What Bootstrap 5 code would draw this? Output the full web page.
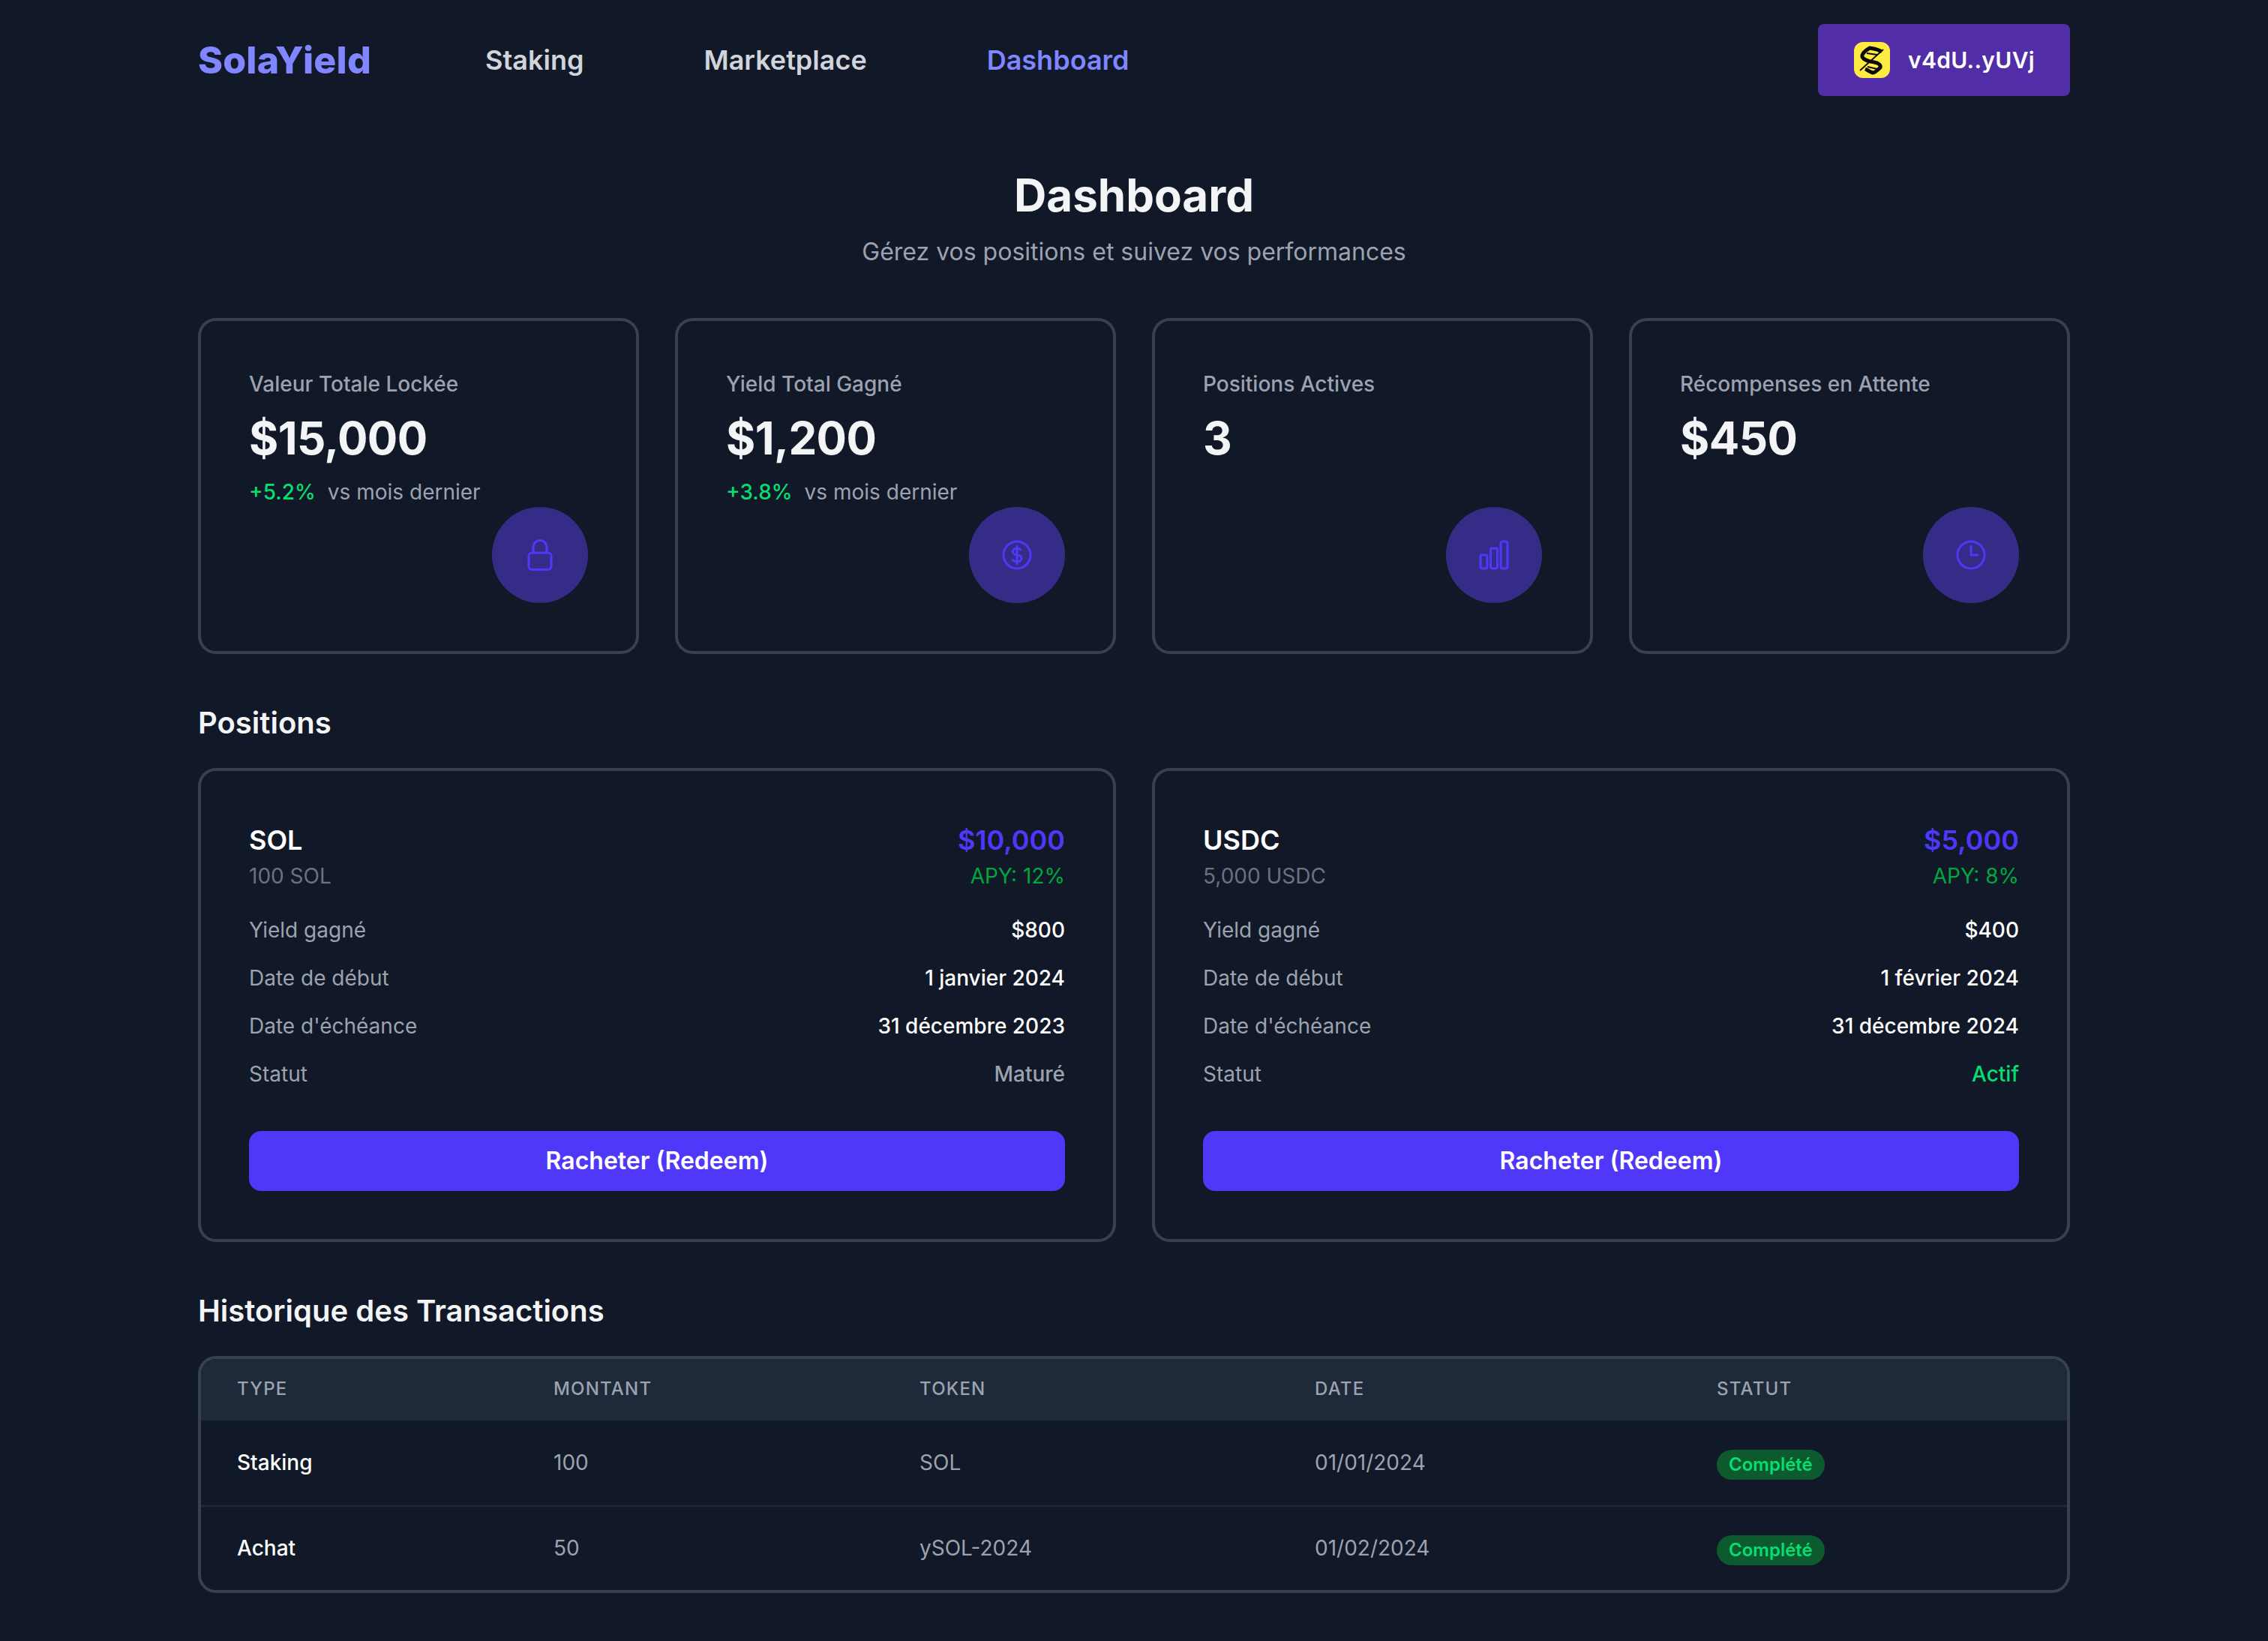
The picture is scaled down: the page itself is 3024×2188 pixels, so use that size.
<!doctype html>
<html lang="fr">
<head>
<meta charset="utf-8">
<title>SolaYield</title>
<link rel="stylesheet" href="https://cdn.jsdelivr.net/npm/bootstrap@5.3.0/dist/css/bootstrap.min.css">
<style>
body{background:#111827;color:#f3f4f6;font-family:Inter,"Liberation Sans",sans-serif;font-size:32px;line-height:1.5}
.sy-wrap{width:2496px;margin:0 auto;padding-bottom:64px}
.sy-nav{height:160px}
.sy-brand{font-size:50px;font-weight:800;color:#7f86ff;line-height:72px;width:223px;margin-right:160px;text-decoration:none;white-space:nowrap;letter-spacing:.2px}
.sy-links{gap:160px}
.sy-links a{font-size:36px;font-weight:600;color:#d1d5db;text-decoration:none;line-height:48px}
.sy-links a.sy-on{color:#7f86ff}
.sy-wallet{height:96px;width:336px;background:#512da8;border:0;border-radius:8px;color:#fff;font-weight:600;font-size:30px;letter-spacing:.3px;padding:0 48px;gap:24px}
.sy-wallet:hover{background:#512da8;color:#fff}
.sy-logo{width:48px;height:48px;flex:none}
.sy-title{font-size:60px;font-weight:700;line-height:72px;margin:64px 0 16px;color:#f3f4f6}
.sy-sub{font-size:32px;line-height:48px;color:#9ca3af;margin-bottom:64px}
.sy-cols{--bs-gutter-x:48px;--bs-gutter-y:0}
.sy-card{background:transparent;border:4px solid #374151;border-radius:24px;padding:64px;color:#f3f4f6}
.sy-stat{height:448px}
.sy-lab{font-size:28px;line-height:40px;color:#9ca3af;font-weight:500}
.sy-val{font-size:60px;line-height:72px;font-weight:700;letter-spacing:-.6px;margin:16px 0}
.sy-chg{font-size:28px;line-height:40px;color:#9ca3af}
.sy-up{color:#05df72;font-weight:500;margin-right:16px}
.sy-disc{width:128px;height:128px;background:#342c87;border-radius:50%;flex:none}
.sy-disc svg{width:48px;height:48px;fill:none;stroke:#5038fa;stroke-width:1.5;stroke-linecap:round;stroke-linejoin:round}
.sy-h2{font-size:40px;line-height:56px;font-weight:600;color:#f3f4f6;margin:0 0 32px}
.sy-sec1,.sy-sec2{margin-top:64px}
.sy-pos{height:632px}
.sy-tok{font-size:36px;line-height:56px;font-weight:600;color:#fff}
.sy-price{font-size:36px;line-height:56px;font-weight:600;color:#5038fa}
.sy-qty{font-size:28px;line-height:40px;color:#6a7282}
.sy-apy{font-size:28px;line-height:40px;color:#00a63e}
.sy-rows{margin-top:32px;gap:24px}
.sy-rowl{font-size:28px;line-height:40px;color:#9ca3af}
.sy-rowv{font-size:28px;line-height:40px;color:#fff;font-weight:500}
.sy-rowv.sy-mat{color:#9ca3af}
.sy-rowv.sy-act{color:#05df72}
.sy-btn{height:80px;margin-top:56px;background:#5038fa;color:#fff;border:0;border-radius:16px;font-size:32px;font-weight:600;line-height:48px;padding:0}
.sy-btn:hover{background:#5038fa;color:#fff}
.sy-tbox{border:4px solid #374151;border-radius:24px;overflow:hidden}
.sy-table{margin:0;table-layout:fixed;width:2488px;--bs-table-bg:transparent;--bs-table-color:#9ca3af;color:#9ca3af}
.sy-table th{background:#1e2939;color:#9ca3af;font-size:24px;font-weight:500;letter-spacing:1.2px;text-transform:uppercase;height:82px;padding:0 0 2px 48px;vertical-align:middle;border:0;line-height:32px}
.sy-table td{height:112px;padding:0 0 2px 48px;vertical-align:middle;font-size:28px;line-height:40px;border:0;color:#9ca3af}
.sy-table tbody tr:first-child td{height:114px;border-bottom:2px solid #1e2939}
.sy-table td.sy-type{color:#fff;font-weight:500}
.sy-c1{width:422px}.sy-c2{width:488px}.sy-c3{width:527px}.sy-c4{width:536px}.sy-c5{width:515px}
.sy-pill{display:inline-block;background:#0d5a2e;color:#05df72;font-size:24px;font-weight:600;line-height:40px;height:40px;padding:0 16px;border-radius:20px;vertical-align:middle;margin-top:6px}
</style>
</head>
<body>
<div class="sy-wrap">
  <nav class="sy-nav d-flex align-items-center">
    <a class="sy-brand" href="#">SolaYield</a>
    <div class="sy-links d-flex align-items-center flex-grow-1">
      <a href="#">Staking</a>
      <a href="#">Marketplace</a>
      <a href="#" class="sy-on">Dashboard</a>
    </div>
    <button class="sy-wallet btn d-flex align-items-center" type="button">
      <svg class="sy-logo" viewBox="0 0 48 48" aria-hidden="true"><rect width="48" height="48" rx="12" fill="#ffeb3f"/><g fill="none" stroke="#0a0a0a" stroke-linecap="butt" stroke-linejoin="miter"><path d="M37 13 C31 9 27 9 21 8 C14 12 10 16 11 20 C14 25 21 26 27 27 C33 28 36 31 35 34 C31 38 28 41 25 41 C21 40 18 37 15 36" stroke-width="5"/><path d="M8 38 L39 10" stroke-width="1.8"/><path d="M17 15 L31 17 M18 33 L31 36" stroke-width="1.8"/></g></svg>
      <span>v4dU..yUVj</span>
    </button>
  </nav>

  <header class="text-center">
    <h1 class="sy-title">Dashboard</h1>
    <p class="sy-sub">Gérez vos positions et suivez vos performances</p>
  </header>

  <div class="row sy-cols">
    <div class="col-3">
      <div class="card sy-card sy-stat">
        <div class="sy-lab">Valeur Totale Lockée</div>
        <div class="sy-val">$15,000</div>
        <div class="sy-chg"><span class="sy-up">+5.2%</span>vs mois dernier</div>
        <div class="sy-disc d-flex align-items-center justify-content-center ms-auto mt-auto">
          <svg viewBox="0 0 24 24"><path d="M16.5 10.5V6.75a4.5 4.5 0 1 0-9 0v3.75m-.75 11.25h10.5a2.25 2.25 0 0 0 2.25-2.25v-6.75a2.25 2.25 0 0 0-2.25-2.25H6.75a2.25 2.25 0 0 0-2.25 2.25v6.75a2.25 2.25 0 0 0 2.25 2.25Z"/></svg>
        </div>
      </div>
    </div>
    <div class="col-3">
      <div class="card sy-card sy-stat">
        <div class="sy-lab">Yield Total Gagné</div>
        <div class="sy-val">$1,200</div>
        <div class="sy-chg"><span class="sy-up">+3.8%</span>vs mois dernier</div>
        <div class="sy-disc d-flex align-items-center justify-content-center ms-auto mt-auto">
          <svg viewBox="0 0 24 24"><path d="M12 6v12m-3-2.818.879.659c1.171.879 3.07.879 4.242 0 1.172-.879 1.172-2.303 0-3.182C13.536 12.219 12.768 12 12 12c-.725 0-1.45-.22-2.003-.659-1.106-.879-1.106-2.303 0-3.182s2.9-.879 4.006 0l.415.33M21 12a9 9 0 1 1-18 0 9 9 0 0 1 18 0Z"/></svg>
        </div>
      </div>
    </div>
    <div class="col-3">
      <div class="card sy-card sy-stat">
        <div class="sy-lab">Positions Actives</div>
        <div class="sy-val">3</div>
        <div class="sy-disc d-flex align-items-center justify-content-center ms-auto mt-auto">
          <svg viewBox="0 0 24 24"><path d="M3 13.125C3 12.504 3.504 12 4.125 12h2.25c.621 0 1.125.504 1.125 1.125v6.75C7.5 20.496 6.996 21 6.375 21h-2.25A1.125 1.125 0 0 1 3 19.875v-6.75ZM9.75 8.625c0-.621.504-1.125 1.125-1.125h2.25c.621 0 1.125.504 1.125 1.125v11.25c0 .621-.504 1.125-1.125 1.125h-2.25a1.125 1.125 0 0 1-1.125-1.125V8.625ZM16.5 4.125c0-.621.504-1.125 1.125-1.125h2.25C20.496 3 21 3.504 21 4.125v15.75c0 .621-.504 1.125-1.125 1.125h-2.25a1.125 1.125 0 0 1-1.125-1.125V4.125Z"/></svg>
        </div>
      </div>
    </div>
    <div class="col-3">
      <div class="card sy-card sy-stat">
        <div class="sy-lab">Récompenses en Attente</div>
        <div class="sy-val">$450</div>
        <div class="sy-disc d-flex align-items-center justify-content-center ms-auto mt-auto">
          <svg viewBox="0 0 24 24"><path d="M12 6v6h4.5m4.5 0a9 9 0 1 1-18 0 9 9 0 0 1 18 0Z"/></svg>
        </div>
      </div>
    </div>
  </div>

  <section class="sy-sec1">
    <h2 class="sy-h2">Positions</h2>
    <div class="row sy-cols">
      <div class="col-6">
        <div class="card sy-card sy-pos">
          <div class="d-flex justify-content-between"><span class="sy-tok">SOL</span><span class="sy-price">$10,000</span></div>
          <div class="d-flex justify-content-between"><span class="sy-qty">100 SOL</span><span class="sy-apy">APY: 12%</span></div>
          <div class="sy-rows d-flex flex-column">
            <div class="d-flex justify-content-between"><span class="sy-rowl">Yield gagné</span><span class="sy-rowv">$800</span></div>
            <div class="d-flex justify-content-between"><span class="sy-rowl">Date de début</span><span class="sy-rowv">1 janvier 2024</span></div>
            <div class="d-flex justify-content-between"><span class="sy-rowl">Date d'échéance</span><span class="sy-rowv">31 décembre 2023</span></div>
            <div class="d-flex justify-content-between"><span class="sy-rowl">Statut</span><span class="sy-rowv sy-mat">Maturé</span></div>
          </div>
          <button class="btn sy-btn w-100" type="button">Racheter (Redeem)</button>
        </div>
      </div>
      <div class="col-6">
        <div class="card sy-card sy-pos">
          <div class="d-flex justify-content-between"><span class="sy-tok">USDC</span><span class="sy-price">$5,000</span></div>
          <div class="d-flex justify-content-between"><span class="sy-qty">5,000 USDC</span><span class="sy-apy">APY: 8%</span></div>
          <div class="sy-rows d-flex flex-column">
            <div class="d-flex justify-content-between"><span class="sy-rowl">Yield gagné</span><span class="sy-rowv">$400</span></div>
            <div class="d-flex justify-content-between"><span class="sy-rowl">Date de début</span><span class="sy-rowv">1 février 2024</span></div>
            <div class="d-flex justify-content-between"><span class="sy-rowl">Date d'échéance</span><span class="sy-rowv">31 décembre 2024</span></div>
            <div class="d-flex justify-content-between"><span class="sy-rowl">Statut</span><span class="sy-rowv sy-act">Actif</span></div>
          </div>
          <button class="btn sy-btn w-100" type="button">Racheter (Redeem)</button>
        </div>
      </div>
    </div>
  </section>

  <section class="sy-sec2">
    <h2 class="sy-h2">Historique des Transactions</h2>
    <div class="sy-tbox">
      <table class="table sy-table">
        <thead>
          <tr><th class="sy-c1">Type</th><th class="sy-c2">Montant</th><th class="sy-c3">Token</th><th class="sy-c4">Date</th><th class="sy-c5">Statut</th></tr>
        </thead>
        <tbody>
          <tr><td class="sy-type">Staking</td><td>100</td><td>SOL</td><td>01/01/2024</td><td><span class="sy-pill">Complété</span></td></tr>
          <tr><td class="sy-type">Achat</td><td>50</td><td>ySOL-2024</td><td>01/02/2024</td><td><span class="sy-pill">Complété</span></td></tr>
        </tbody>
      </table>
    </div>
  </section>
</div>
<script src="https://cdn.jsdelivr.net/npm/bootstrap@5.3.0/dist/js/bootstrap.bundle.min.js"></script>
</body>
</html>
